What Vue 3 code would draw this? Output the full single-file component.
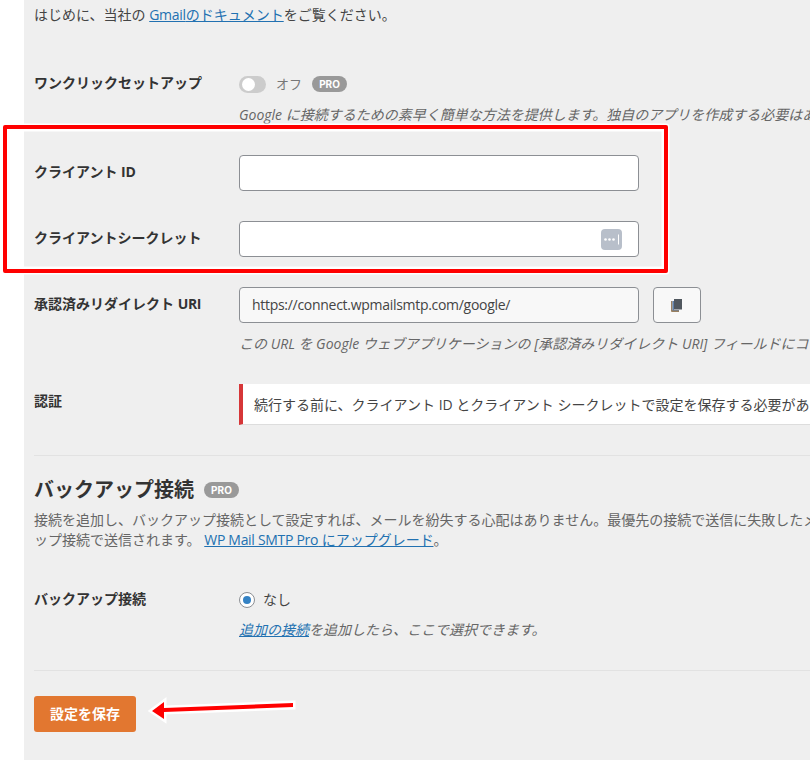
<script setup>
const arrow = '293,703 164,708 164,702 152,711 164,719 164,712 293,707'
</script>

<template>
  <div class="page">
    <div class="gutter"></div>
    <main class="main">
      <p class="intro">はじめに、当社の <a href="#"><span class="latin">Gmail</span>のドキュメント</a>をご覧ください。</p>

      <section class="row row-oneclick">
        <div class="label">ワンクリックセットアップ</div>
        <div class="field">
          <div class="toggle-line">
            <span class="toggle"><span class="knob"></span></span>
            <span class="off">オフ</span>
            <span class="pro">PRO</span>
          </div>
          <p class="desc">Google に接続するための素早く簡単な方法を提供します。独自のアプリを作成する必要はありません。</p>
        </div>
      </section>

      <section class="row row-client">
        <div class="label">クライアント <span class="latin">ID</span></div>
        <div class="field"><div class="input"></div></div>
      </section>

      <section class="row row-secret">
        <div class="label">クライアントシークレット</div>
        <div class="field">
          <div class="input input-secret">
            <span class="key">
              <svg width="21" height="21" viewBox="0 0 21 21">
                <rect width="21" height="21" rx="4" fill="#b8bfca" />
                <circle cx="4.500" cy="10.500" r="1.300" fill="#fff" />
                <circle cx="8.500" cy="10.500" r="1.300" fill="#fff" />
                <circle cx="12.500" cy="10.500" r="1.300" fill="#fff" />
                <rect x="17" y="5.500" width="1" height="10" fill="#fff" />
              </svg>
            </span>
          </div>
        </div>
      </section>

      <section class="row row-uri">
        <div class="label">承認済みリダイレクト <span class="latin">URI</span></div>
        <div class="field">
          <div class="uri-line">
            <div class="input input-uri">https://connect.wpmailsmtp.com/google/</div>
            <button class="copy" type="button">
              <svg width="11" height="13" viewBox="0 0 11 13">
                <path d="M0 2h1.500v9H8v2H1a1 1 0 0 1-1-1z" fill="#9a8060" />
                <path d="M1.500 2H3v9h5v.6H1.500z" fill="#5d7ea8" />
                <path d="M3 0h8v10.500H3z" fill="#50575e" />
              </svg>
            </button>
          </div>
          <p class="desc desc-uri">この URL を Google ウェブアプリケーションの [承認済みリダイレクト URI] フィールドにコピーしてください。</p>
        </div>
      </section>

      <section class="row row-auth">
        <div class="label">認証</div>
        <div class="field">
          <div class="notice">続行する前に、クライアント ID とクライアント シークレットで設定を保存する必要があります。</div>
        </div>
      </section>

      <hr class="rule rule-first" />

      <h2 class="heading">バックアップ接続 <span class="pro pro-heading">PRO</span></h2>
      <p class="para">接続を追加し、バックアップ接続として設定すれば、メールを紛失する心配はありません。最優先の接続で送信に失敗したメールは、バック</p>
      <p class="para">ップ接続で送信されます。 <a href="#"><span class="latin">WP Mail SMTP Pro</span> にアップグレード</a>。</p>

      <section class="row row-backup">
        <div class="label">バックアップ接続</div>
        <div class="field">
          <div class="radio-line">
            <span class="radio"><span class="dot"></span></span>
            <span>なし</span>
          </div>
          <p class="desc desc-backup"><a href="#">追加の接続</a>を追加したら、ここで選択できます。</p>
        </div>
      </section>

      <hr class="rule rule-second" />

      <button class="save" type="button">設定を保存</button>
    </main>

    <div class="callout"></div>
    <svg class="annot-arrow" width="810" height="760" viewBox="0 0 810 760">
      <polygon :points="arrow" fill="#f00" stroke="#fff" stroke-width="5" paint-order="stroke" />
    </svg>
  </div>
</template>

<style>
html, body { margin: 0; background: #fff; }
</style>

<style scoped>
.page {
  position: relative;
  display: flex;
  width: 810px;
  height: 760px;
  overflow: hidden;
  background: #fff;
  color: #444;
  font-family: "Open Sans", "Noto Sans CJK JP", sans-serif;
  font-size: 14px;
  line-height: 20px;
}
.gutter { flex: 0 0 24px; }
.main {
  flex: 1;
  min-width: 0;
  padding-left: 10px;
  background: #efefef;
}
p { margin: 0; white-space: nowrap; }
a { color: #2271b1; text-decoration: underline; }
.latin { letter-spacing: -0.3px; }
.intro { padding-top: 5px; }
.row { display: flex; white-space: nowrap; }
.label {
  flex: 0 0 205px;
  font-weight: 700;
  color: #333;
}
.field { flex: 1; min-width: 0; }
.row-oneclick { margin-top: 48px; }
.toggle-line { display: flex; align-items: center; height: 20px; margin-top: 1px; }
.toggle {
  display: block;
  width: 27px;
  height: 17px;
  border-radius: 9px;
  background: #ccc;
  position: relative;
}
.knob {
  position: absolute;
  left: 3px;
  top: 2px;
  width: 13px;
  height: 13px;
  border-radius: 50%;
  background: #fff;
}
.off { margin-left: 10px; color: #777; font-size: 13px; }
.pro {
  display: inline-block;
  width: 35px;
  height: 16px;
  margin-left: 10px;
  border-radius: 8px;
  background: #999;
  color: #fff;
  font-size: 10px;
  font-weight: 700;
  line-height: 16px;
  text-align: center;
  font-family: Inter, "Open Sans", sans-serif;
}
.desc { font-style: italic; color: #666; }
.row-oneclick .desc { margin-top: 11px; }
.row-client { margin-top: 30px; }
.row-client .label, .row-secret .label, .row-uri .label { padding-top: 7px; }
.input {
  box-sizing: border-box;
  width: 400px;
  height: 36px;
  border: 1px solid #8c8f94;
  border-radius: 4px;
  background: #fff;
}
.row-secret { margin-top: 30px; }
.input-secret { display: flex; align-items: center; justify-content: flex-end; padding-right: 16px; }
.key { display: block; height: 21px; }
.row-uri { margin-top: 30px; }
.uri-line { display: flex; gap: 14px; }
.input-uri {
  background: #f8f8f8;
  padding-left: 12px;
  line-height: 33px;
  color: #444;
  letter-spacing: -0.29px;
}
.copy {
  box-sizing: border-box;
  display: flex;
  align-items: center;
  justify-content: center;
  width: 48px;
  height: 36px;
  padding: 0 1px 0 0;
  border: 1px solid #8c8f94;
  border-radius: 4px;
  background: #f8f8f8;
}
.desc-uri { margin-top: 11px; }
.row-auth { margin-top: 30px; }
.row-auth .label { padding-top: 7px; }
.notice {
  box-sizing: border-box;
  height: 41px;
  padding: 11px 12px 0 11px;
  border-left: 4px solid #d63638;
  border-bottom: 1px solid #ddd;
  background: #fff;
  color: #444;
  white-space: nowrap;
}
.rule { height: 1px; margin: 0; border: 0; background: #e2e2e2; }
.rule-first { margin-top: 30px; }
.heading {
  display: flex;
  align-items: center;
  margin: 20px 0 0;
  height: 28px;
  color: #333;
  font-size: 20px;
  line-height: 28px;
  font-weight: 700;
}
.pro-heading { margin-left: 10px; }
.para { color: #666; }
.heading + .para { margin-top: 6px; }
.row-backup { margin-top: 39px; }
.radio-line { display: flex; align-items: center; gap: 8px; height: 22px; color: #444; }
.radio {
  box-sizing: border-box;
  display: flex;
  align-items: center;
  justify-content: center;
  width: 16px;
  height: 16px;
  border: 1px solid #8c8f94;
  border-radius: 50%;
  background: #fff;
}
.dot { width: 8px; height: 8px; border-radius: 50%; background: #3582c4; }
.desc-backup { margin-top: 9px; }
.rule-second { margin-top: 30px; }
.save {
  display: block;
  width: 102px;
  height: 36px;
  margin-top: 25px;
  padding: 0 0 2px;
  border: 0;
  border-radius: 3px;
  background: #e27730;
  color: #fff;
  font-family: inherit;
  font-size: 14px;
  font-weight: 700;
}
.callout {
  position: absolute;
  box-sizing: border-box;
  left: 3px;
  top: 125px;
  width: 665px;
  height: 148px;
  border: 4px solid #f00;
  border-radius: 2px;
  box-shadow: 0 0 0 1.5px #fff, inset 0 0 0 2.5px #fff;
}
.annot-arrow { position: absolute; left: 0; top: 0; pointer-events: none; }
</style>
